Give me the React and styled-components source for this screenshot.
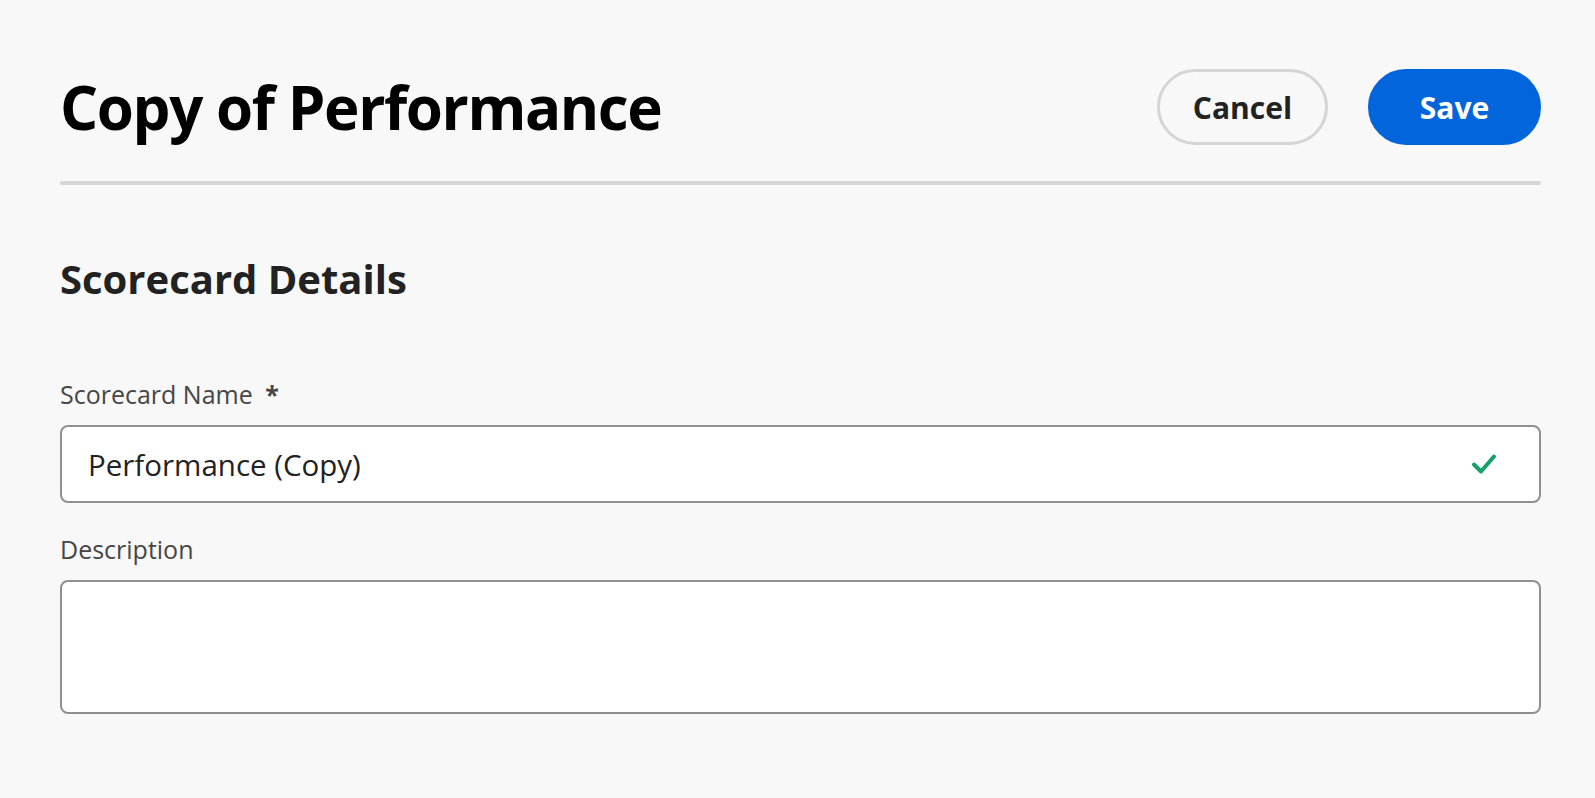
import React from "react";
import styled, { createGlobalStyle } from "styled-components";

const GlobalStyle = createGlobalStyle`
  html, body {
    margin: 0;
    padding: 0;
    background: #f8f8f8;
  }
  body {
    font-family: "Open Sans", "Noto Sans", sans-serif;
    color: #222222;
  }
`;

const CheckIcon = () => (
  <svg width="26" height="22" viewBox="0 0 26 22" fill="none">
    <path
      d="M3 11.5 L10 18.5 L23 3.5"
      stroke="#15a06c"
      strokeWidth="4"
      strokeLinecap="round"
      strokeLinejoin="round"
    />
  </svg>
);

const App = () => {
  return (
    <>
      <GlobalStyle />
      <Page>
        <Header>
          <Title>Copy of Performance</Title>
          <Actions>
            <Button variant="secondary">Cancel</Button>
            <Button variant="primary">Save</Button>
          </Actions>
        </Header>
        <Divider />
        <SectionTitle>Scorecard Details</SectionTitle>
        <Field>
          <Label>
            Scorecard Name <Required>*</Required>
          </Label>
          <InputWrapper>
            <Input defaultValue="Performance (Copy)" />
            <ValidIcon>
              <CheckIcon />
            </ValidIcon>
          </InputWrapper>
        </Field>
        <Field>
          <Label>Description</Label>
          <TextArea />
        </Field>
      </Page>
    </>
  );
};

const Page = styled.div`
  padding: 69px 54px 40px 60px;
  box-sizing: border-box;
  min-height: 100vh;
`;

const Header = styled.div`
  display: flex;
  align-items: center;
  justify-content: space-between;
  height: 76px;
`;

const Title = styled.h1`
  margin: 0;
  font-size: 60px;
  font-weight: 700;
  color: #000000;
  letter-spacing: -1.4px;
`;

const Actions = styled.div`
  display: flex;
  gap: 40px;
`;

const Button = styled.button`
  box-sizing: border-box;
  height: 76px;
  width: ${(p) => (p.variant === "primary" ? "173px" : "171px")};
  border-radius: 38px;
  font-family: "Open Sans", sans-serif;
  font-size: 30px;
  font-weight: 700;
  cursor: pointer;
  border: 3px solid
    ${(p) => (p.variant === "primary" ? "#0265dc" : "#d5d5d5")};
  background: ${(p) => (p.variant === "primary" ? "#0265dc" : "#f8f8f8")};
  color: ${(p) => (p.variant === "primary" ? "#ffffff" : "#222222")};
`;

const Divider = styled.div`
  margin-top: 36px;
  height: 4px;
  border-radius: 2px;
  background: #d5d5d5;
`;

const SectionTitle = styled.h2`
  margin: 68px 0 0;
  font-size: 40px;
  font-weight: 700;
  color: #222222;
  line-height: 52px;
`;

const Field = styled.div`
  display: flex;
  flex-direction: column;
  margin-top: 72px;

  & + & {
    margin-top: 29px;
  }
`;

const Label = styled.label`
  font-size: 25px;
  color: #464646;
  line-height: 34px;
  margin-bottom: 14px;
`;

const Required = styled.span`
  margin-left: 6px;
  font-weight: 700;
`;

const InputWrapper = styled.div`
  position: relative;
  display: flex;
`;

const Input = styled.input`
  box-sizing: border-box;
  width: 100%;
  height: 78px;
  border: 2px solid #909090;
  border-radius: 8px;
  background: #ffffff;
  padding: 0 80px 0 26px;
  font-family: "Open Sans", sans-serif;
  font-size: 29.5px;
  color: #222222;
  outline: none;
`;

const ValidIcon = styled.span`
  position: absolute;
  right: 44px;
  top: 50%;
  transform: translateY(-50%);
  display: flex;
`;

const TextArea = styled.textarea`
  box-sizing: border-box;
  width: 100%;
  height: 134px;
  border: 2px solid #909090;
  border-radius: 8px;
  background: #ffffff;
  resize: none;
  font-family: "Open Sans", sans-serif;
  font-size: 29px;
  outline: none;
`;

export default App;
